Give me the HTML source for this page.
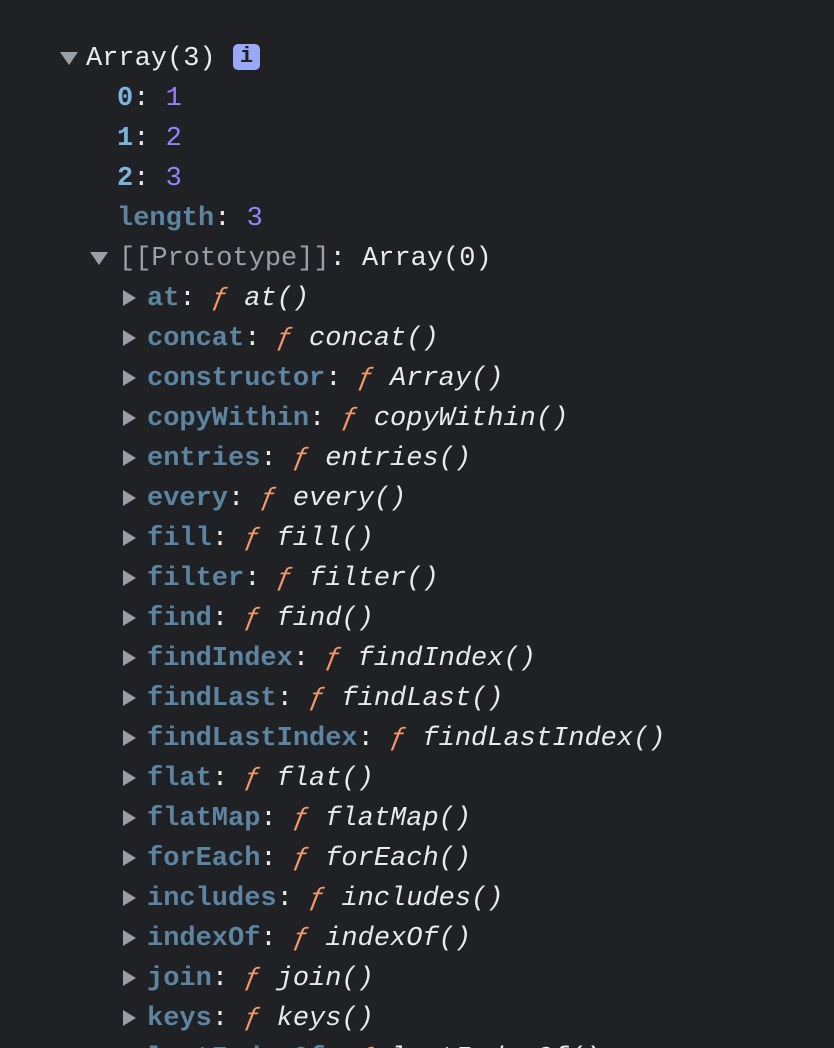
<!DOCTYPE html>
<html><head><meta charset="utf-8"><style>
html,body{margin:0;padding:0;background:#202124;width:834px;height:1048px;overflow:hidden}
body{font-family:"Liberation Mono",monospace;font-size:27px;color:#e8eaed;position:relative}
.r{position:absolute;height:40px;line-height:40px;white-space:pre}
.tri{position:absolute;width:0;height:0}
.down{border-left:9px solid transparent;border-right:9px solid transparent;border-top:13px solid #9aa0a6}
.right{border-top:8px solid transparent;border-bottom:8px solid transparent;border-left:13px solid #9aa0a6}
.idx{color:#7cb4dc;font-weight:bold}
.k{color:#5d84a1;font-weight:bold}
.n{color:#9980ff}
.f{color:#f29766;font-style:italic}
.fn{font-style:italic;color:#e8eaed}
.g{color:#9aa0a6}
.badge{position:absolute;left:233px;top:44px;width:27px;height:26px;background:#9aa8f8;border-radius:5px;color:#202124;font-size:22px;line-height:26px;text-align:center;font-weight:bold}
</style></head><body>
<div class="tri down" style="left:60px;top:52px"></div>
<div class="r" style="left:86px;top:39px">Array(3)</div>
<div class="badge">i</div>
<div class="r" style="left:117px;top:79px"><span class="idx">0</span>: <span class="n">1</span></div>
<div class="r" style="left:117px;top:119px"><span class="idx">1</span>: <span class="n">2</span></div>
<div class="r" style="left:117px;top:159px"><span class="idx">2</span>: <span class="n">3</span></div>
<div class="r" style="left:117px;top:199px"><span class="k">length</span>: <span class="n">3</span></div>
<div class="tri down" style="left:90px;top:252px"></div>
<div class="r" style="left:119px;top:239px"><span class="g">[[Prototype]]</span>: Array(0)</div>
<div id="list"></div>
<script>
var names=["at","concat","constructor","copyWithin","entries","every","fill","filter","find","findIndex","findLast","findLastIndex","flat","flatMap","forEach","includes","indexOf","join","keys","lastIndexOf"];
var h="";
names.forEach(function(n,i){
 var fn=(n=="constructor")?"Array":n;
 var t=279+40*i;
 h+='<div class="tri right" style="left:123px;top:'+(t+11)+'px"></div>';
 h+='<div class="r" style="left:147px;top:'+t+'px"><span class="k">'+n+'</span>: <span class="f">ƒ</span> <span class="fn">'+fn+'()</span></div>';
});
document.getElementById("list").innerHTML=h;
</script>
</body></html>
